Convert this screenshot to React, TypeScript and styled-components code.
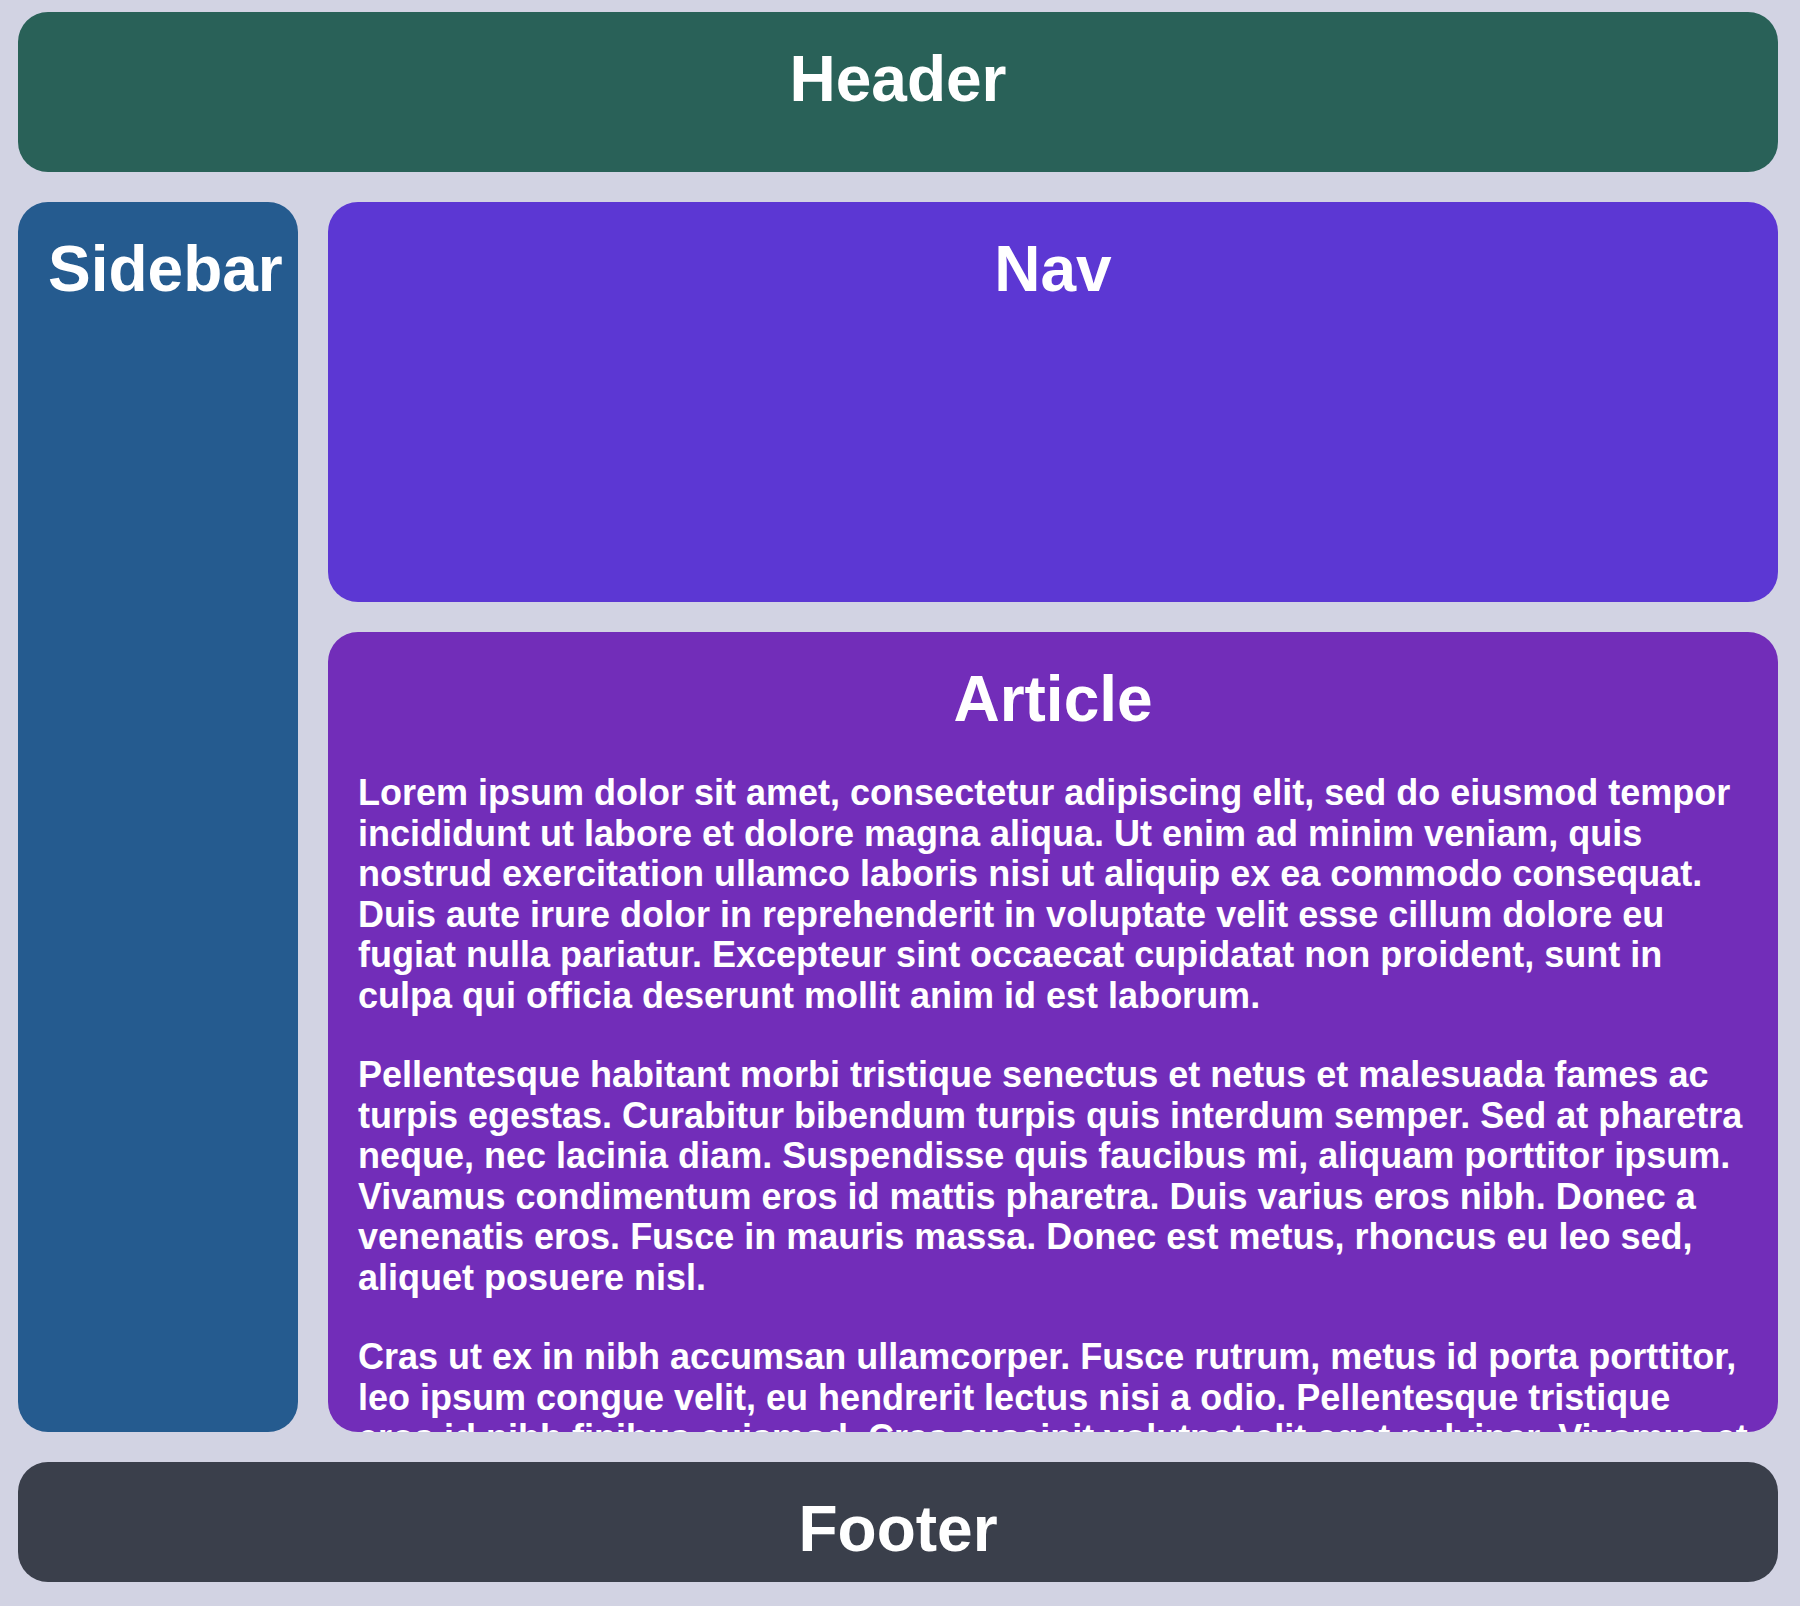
import React from "react";
import styled, { createGlobalStyle } from "styled-components";

const GlobalStyle = createGlobalStyle`
  html, body {
    margin: 0;
    padding: 0;
    background: #d2d3e3;
  }
  body {
    font-family: "Liberation Sans", Arial, Helvetica, sans-serif;
    font-weight: 700;
    color: #ffffff;
  }
`;

const Layout = styled.div`
  box-sizing: border-box;
  width: 1800px;
  height: 1606px;
  padding: 12px 22px 24px 18px;
  display: grid;
  grid-template-columns: 280px 1fr;
  grid-template-rows: 160px 400px 800px 120px;
  gap: 30px;
  grid-template-areas:
    "header header"
    "sidebar nav"
    "sidebar article"
    "footer footer";
`;

const Panel = styled.section<{ $area: string; $bg: string }>`
  grid-area: ${(p) => p.$area};
  background: ${(p) => p.$bg};
  border-radius: 30px;
  padding: 30px;
  box-sizing: border-box;
  overflow: hidden;
  min-width: 0;
  min-height: 0;
  text-align: center;
`;

const Title = styled.h1`
  margin: 0;
  font-size: 64px;
  line-height: normal;
  font-weight: 700;
  white-space: nowrap;
`;

const Paragraph = styled.p`
  margin: 39px 0;
  font-size: 36px;
  line-height: 40.5px;
  text-align: left;

  &:first-of-type {
    margin-top: 37px;
  }
`;

const paragraphs = [
  "Lorem ipsum dolor sit amet, consectetur adipiscing elit, sed do eiusmod tempor incididunt ut labore et dolore magna aliqua. Ut enim ad minim veniam, quis nostrud exercitation ullamco laboris nisi ut aliquip ex ea commodo consequat. Duis aute irure dolor in reprehenderit in voluptate velit esse cillum dolore eu fugiat nulla pariatur. Excepteur sint occaecat cupidatat non proident, sunt in culpa qui officia deserunt mollit anim id est laborum.",
  "Pellentesque habitant morbi tristique senectus et netus et malesuada fames ac turpis egestas. Curabitur bibendum turpis quis interdum semper. Sed at pharetra neque, nec lacinia diam. Suspendisse quis faucibus mi, aliquam porttitor ipsum. Vivamus condimentum eros id mattis pharetra. Duis varius eros nibh. Donec a venenatis eros. Fusce in mauris massa. Donec est metus, rhoncus eu leo sed, aliquet posuere nisl.",
  "Cras ut ex in nibh accumsan ullamcorper. Fusce rutrum, metus id porta porttitor, leo ipsum congue velit, eu hendrerit lectus nisi a odio. Pellentesque tristique eros id nibh finibus euismod. Cras suscipit volutpat elit eget pulvinar. Vivamus et nulla vitae justo faucibus pretium. Nam sed dui at lorem tempus dapibus.",
];

export default function App() {
  return (
    <>
      <GlobalStyle />
      <Layout>
        <Panel as="header" $area="header" $bg="#296158">
          <Title>Header</Title>
        </Panel>
        <Panel as="aside" $area="sidebar" $bg="#255b8f">
          <Title>Sidebar</Title>
        </Panel>
        <Panel as="nav" $area="nav" $bg="#5c37d3">
          <Title>Nav</Title>
        </Panel>
        <Panel as="article" $area="article" $bg="#722db9">
          <Title>Article</Title>
          {paragraphs.map((t, i) => (
            <Paragraph key={i}>{t}</Paragraph>
          ))}
        </Panel>
        <Panel as="footer" $area="footer" $bg="#3a3f4b">
          <Title>Footer</Title>
        </Panel>
      </Layout>
    </>
  );
}
